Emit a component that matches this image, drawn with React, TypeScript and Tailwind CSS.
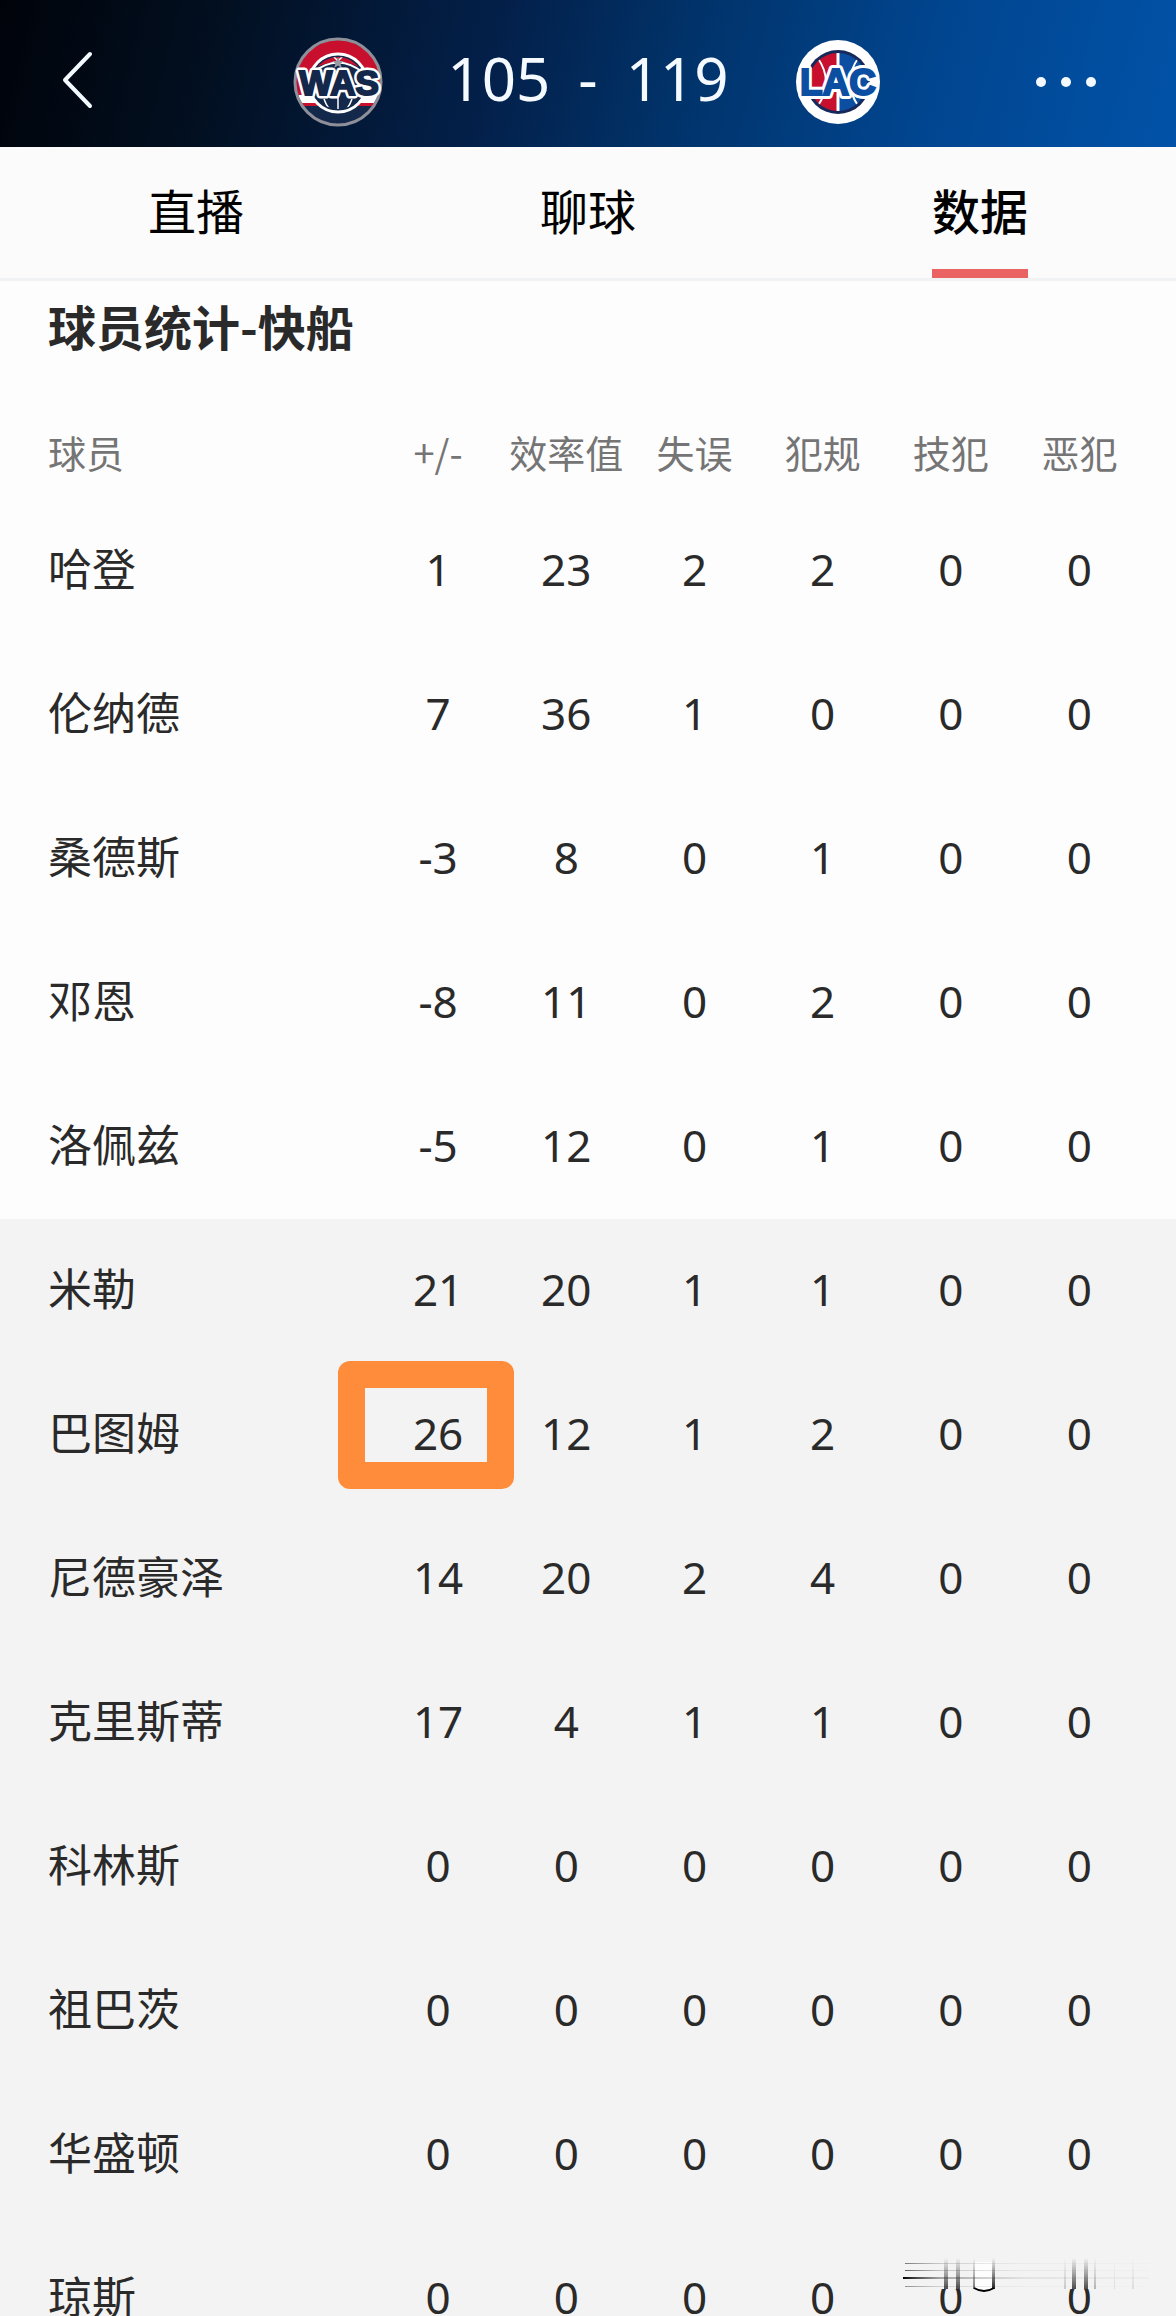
import { clsx } from 'clsx';

const tabs = ['直播', '聊球', '数据'];

const columns = ['+/-', '效率值', '失误', '犯规', '技犯', '恶犯'];

type Player = { name: string; stats: number[]; marked?: boolean };

const starters: Player[] = [
  { name: '哈登', stats: [1, 23, 2, 2, 0, 0] },
  { name: '伦纳德', stats: [7, 36, 1, 0, 0, 0] },
  { name: '桑德斯', stats: [-3, 8, 0, 1, 0, 0] },
  { name: '邓恩', stats: [-8, 11, 0, 2, 0, 0] },
  { name: '洛佩兹', stats: [-5, 12, 0, 1, 0, 0] },
];

const bench: Player[] = [
  { name: '米勒', stats: [21, 20, 1, 1, 0, 0] },
  { name: '巴图姆', stats: [26, 12, 1, 2, 0, 0], marked: true },
  { name: '尼德豪泽', stats: [14, 20, 2, 4, 0, 0] },
  { name: '克里斯蒂', stats: [17, 4, 1, 1, 0, 0] },
  { name: '科林斯', stats: [0, 0, 0, 0, 0, 0] },
  { name: '祖巴茨', stats: [0, 0, 0, 0, 0, 0] },
  { name: '华盛顿', stats: [0, 0, 0, 0, 0, 0] },
  { name: '琼斯', stats: [0, 0, 0, 0, 0, 0] },
];

const WizardsLogo = () => (
  <svg viewBox="0 0 90 90" className="size-[90px]" role="img" aria-label="WAS">
    <defs>
      <clipPath id="was-disc"><circle cx="45" cy="45" r="42" /></clipPath>
      <clipPath id="was-ball"><circle cx="45" cy="46" r="26" /></clipPath>
    </defs>
    <g clipPath="url(#was-disc)">
      <rect width="90" height="90" fill="#c8102e" />
      <rect y="58" width="90" height="8" fill="#fff" />
      <rect y="66" width="90" height="4" fill="#c8102e" />
      <rect y="69" width="90" height="21" fill="#14284b" />
    </g>
    <circle cx="45" cy="45" r="43" fill="none" stroke="#8d8f99" strokeWidth="3" />
    <circle cx="45" cy="46" r="28" fill="#14284b" />
    <g clipPath="url(#was-ball)">
      <path d="M14 14h62v22q-31-22-62 0z" fill="#c8102e" />
      <path d="M17 38q28-25 56 0" fill="none" stroke="#fff" strokeWidth="2" />
      <path d="M45 60v16M38 17l7 7 7-7M31 62q2 6 6 11M59 62q-2 6-6 11" fill="none" stroke="#fff" strokeWidth="1.5" />
    </g>
    <circle cx="45" cy="46" r="29" fill="none" stroke="#fff" strokeWidth="3" />
    <path d="M45 20l1.800 4h4l-3.200 2.700 1.200 4.300-3.800-2.500-3.800 2.500 1.200-4.300-3.200-2.700h4z" fill="#9a9ca3" />
    <text x="46" y="58" textAnchor="middle" fontSize="35" fontWeight="900" className="font-['Liberation_Sans',sans-serif]" stroke="#fff" strokeWidth="7" strokeLinejoin="round" fill="#fff">WAS</text>
    <text x="46" y="58" textAnchor="middle" fontSize="35" fontWeight="900" className="font-['Liberation_Sans',sans-serif]" stroke="#14284b" strokeWidth="2" fill="#14284b">WAS</text>
  </svg>
);

const ClippersLogo = () => (
  <svg viewBox="0 0 90 90" className="size-[90px]" role="img" aria-label="LAC">
    <defs>
      <clipPath id="lac-ball"><circle cx="45" cy="45" r="29" /></clipPath>
    </defs>
    <circle cx="45" cy="45" r="42" fill="#fff" />
    <circle cx="45" cy="45" r="32" fill="#17295a" />
    <g clipPath="url(#lac-ball)">
      <rect width="45" height="90" fill="#c8102e" />
      <rect x="45" width="45" height="90" fill="#0b4ea2" />
      <path d="M45 13v64" fill="none" stroke="#fff" strokeWidth="3" />
      <path d="M24 20q18 25 0 50M66 20q-18 25 0 50" fill="none" stroke="#fff" strokeWidth="2" />
    </g>
    <text x="45" y="58" textAnchor="middle" fontSize="37" fontWeight="900" className="font-['Liberation_Sans',sans-serif]" stroke="#fff" strokeWidth="8" strokeLinejoin="round" fill="#fff">LAC</text>
    <text x="45" y="58" textAnchor="middle" fontSize="37" fontWeight="900" className="font-['Liberation_Sans',sans-serif]" stroke="#0b4ea2" strokeWidth="2" fill="#0b4ea2">LAC</text>
  </svg>
);

// streaks left in the corner above the last row
const Smudge = () => (
  <svg viewBox="0 0 248 36" className="pointer-events-none absolute left-4 top-[30px] z-10 h-9 w-[248px]" aria-hidden="true">
    <defs>
      <linearGradient id="fade-x">
        <stop offset="0" stopColor="#000" />
        <stop offset="0.150" stopColor="#555" stopOpacity="0.500" />
        <stop offset="0.500" stopColor="#888" stopOpacity="0.150" />
        <stop offset="1" stopColor="#888" stopOpacity="0.050" />
      </linearGradient>
      <linearGradient id="fade-y" x1="0" y1="0" x2="0" y2="1">
        <stop offset="0" stopColor="#333" stopOpacity="0" />
        <stop offset="1" stopColor="#222" />
      </linearGradient>
    </defs>
    <rect width="248" height="31" y="1" fill="#f3f3f3" />
    <path d="M72 5h18v26q-9 5-18 0z" fill="#fdfdfd" />
    <g fill="url(#fade-x)">
      <rect x="2" y="6" width="244" height="1" opacity="0.500" />
      <rect x="2" y="13" width="244" height="1" opacity="0.600" />
      <rect x="0" y="20" width="246" height="2" />
      <rect x="2" y="29" width="244" height="1" opacity="0.400" />
    </g>
    <g fill="url(#fade-y)">
      <rect x="41" y="1" width="4" height="31" opacity="0.800" />
      <rect x="53" y="1" width="4" height="31" opacity="0.800" />
      <rect x="70" y="1" width="2" height="31" opacity="0.600" />
      <rect x="89" y="1" width="3" height="31" />
      <rect x="161" y="1" width="2" height="31" opacity="0.200" />
      <rect x="169" y="1" width="4" height="31" opacity="0.800" />
      <rect x="181" y="1" width="4" height="31" opacity="0.800" />
      <rect x="191" y="1" width="2" height="31" opacity="0.300" />
      <rect x="211" y="1" width="1" height="31" opacity="0.100" />
      <rect x="229" y="1" width="2" height="31" opacity="0.100" />
    </g>
    <path d="M71 31q10 6 20 0" fill="none" stroke="#000" strokeWidth="2" />
  </svg>
);

const PlayerRow = ({ player, last }: { player: Player; last?: boolean }) => (
  <tr className="h-36">
    <th scope="row" className="pb-2 pl-12 text-left font-normal">{player.name}</th>
    {player.stats.map((value, i) => (
      <td key={i} className="relative p-0 pb-1 text-center font-['Noto_Sans',sans-serif] last:pr-8">
        {value}
        {player.marked && i === 0 && (
          <span className="absolute -left-9 -top-0.5 h-32 w-44 rounded-xl border-[27px] border-[#ff8c3a]" />
        )}
        {last && i === 4 && <Smudge />}
      </td>
    ))}
  </tr>
);

export default function App() {
  return (
    <div className="flex h-screen flex-col overflow-hidden bg-[#fdfdfd] font-['Noto_Sans_CJK_SC',sans-serif] text-[#2a2a2a]">
      <header className="grid h-[147px] shrink-0 grid-cols-[1fr_auto_1fr] items-center bg-[linear-gradient(104deg,#00030a_0%,#020f20_18%,#03204a_42%,#01336a_58%,#01458f_78%,#0152a8_100%)] pl-[60px] pr-20 pt-4 text-[#f4faff]">
        <button type="button" aria-label="返回" className="w-[60px] pb-1">
          <svg viewBox="0 0 34 60" className="h-[60px] w-[34px]" fill="none" stroke="currentColor" strokeWidth="4" strokeLinecap="round" strokeLinejoin="round">
            <path d="M30 4L5 30l25 26" />
          </svg>
        </button>
        <div className="ml-5 flex items-center gap-16">
          <WizardsLogo />
          <div className="flex items-center gap-7 pb-2 font-['Noto_Sans',sans-serif] text-[60px] leading-[80px]">
            <span>105</span>
            <span>-</span>
            <span>119</span>
          </div>
          <ClippersLogo />
        </div>
        <button type="button" aria-label="更多" className="flex w-[60px] justify-between justify-self-end">
          <span className="size-[10px] rounded-full bg-current" />
          <span className="size-[10px] rounded-full bg-current" />
          <span className="size-[10px] rounded-full bg-current" />
        </button>
      </header>

      <nav className="grid h-[134px] shrink-0 grid-cols-3 border-b-[3px] border-[#f1f2f3] bg-[#fbfbfc] text-black">
        {tabs.map((tab) => {
          const active = tab === '数据';
          return (
            <button
              key={tab}
              type="button"
              className={clsx('relative flex items-center justify-center pb-2 text-[48px] leading-[64px]', active && 'font-medium')}
            >
              {tab}
              {active && <span className="absolute bottom-0 h-[9px] w-24 bg-[#ea6262]" />}
            </button>
          );
        })}
      </nav>

      <main className="min-h-0 flex-1 overflow-hidden">
        <h2 className="mb-11 pl-12 text-[48px] font-bold leading-[88px]">球员统计-快船</h2>
        <table className="w-full table-fixed border-collapse text-[44px] leading-[60px]">
          <colgroup>
            <col />
            <col className="w-[10.900%]" />
            <col className="w-[10.900%]" />
            <col className="w-[10.900%]" />
            <col className="w-[10.900%]" />
            <col className="w-[10.900%]" />
            <col className="w-[13.700%]" />
          </colgroup>
          <thead>
            <tr className="h-[86px] text-[38px] text-[#757575]">
              <th scope="col" className="pb-2 pl-12 text-left font-normal">球员</th>
              {columns.map((label) => (
                <th key={label} scope="col" className="whitespace-nowrap p-0 pb-2 text-center font-normal last:pr-8">{label}</th>
              ))}
            </tr>
          </thead>
          <tbody>
            {starters.map((player) => <PlayerRow key={player.name} player={player} />)}
          </tbody>
          <tbody className="bg-[#f3f3f3]">
            {bench.map((player, i) => (
              <PlayerRow key={player.name} player={player} last={i === bench.length - 1} />
            ))}
          </tbody>
        </table>
      </main>
    </div>
  );
}
